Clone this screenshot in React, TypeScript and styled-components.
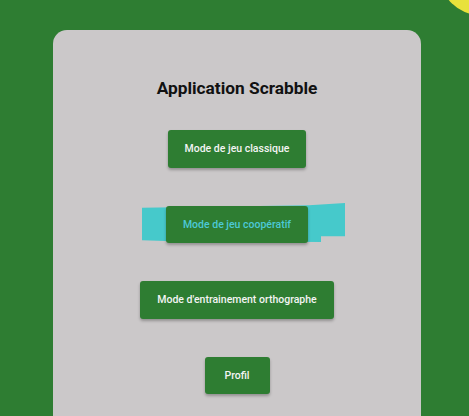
import React from "react";
import styled, { createGlobalStyle } from "styled-components";

const GlobalStyle = createGlobalStyle`
  html, body {
    margin: 0;
    padding: 0;
    background: #2e7d32;
    overflow: hidden;
    font-family: Roboto, "Liberation Sans", Arial, sans-serif;
  }
`;

const Page = styled.div`
  position: relative;
  width: 469px;
  height: 416px;
  overflow: hidden;
  background: #2e7d32;
`;

const Sun = styled.div`
  position: absolute;
  left: 440px;
  top: -65px;
  width: 80px;
  height: 80px;
  border-radius: 50%;
  background: #e8e23b;
`;

const Card = styled.main`
  margin: 30px 0 0 53px;
  width: 368px;
  height: 420px;
  box-sizing: border-box;
  background: #cbc8c9;
  border-radius: 14px;
  padding-top: 48px;
  display: flex;
  flex-direction: column;
  align-items: center;
`;

const Title = styled.h1`
  margin: 0 0 31px;
  font-size: 17.3px;
  line-height: 21px;
  font-weight: 700;
  color: #111;
`;

const Menu = styled.div`
  display: flex;
  flex-direction: column;
  align-items: center;
  gap: 38px;
`;

const Slot = styled.div`
  position: relative;
  display: flex;
`;

const Highlight = styled.svg`
  position: absolute;
  left: -24px;
  top: -3px;
  width: 203px;
  height: 40px;
  z-index: 0;
`;

const Button = styled.button<{ $active?: boolean }>`
  position: relative;
  z-index: 1;
  height: 37.5px;
  min-width: 65px;
  padding: 0 17px;
  border: none;
  border-radius: 3px;
  background: #2e7d32;
  color: ${(p) => (p.$active ? "#4cc9d6" : "#f4f4f4")};
  font-family: Roboto, "Liberation Sans", Arial, sans-serif;
  font-size: 10.5px;
  font-weight: 500;
  box-shadow: 0 2px 3px rgba(0, 0, 0, 0.28);
  cursor: pointer;
`;

export default function App() {
  return (
    <Page>
      <GlobalStyle />
      <Sun />
      <Card>
        <Title>Application Scrabble</Title>
        <Menu>
          <Slot>
            <Button>Mode de jeu classique</Button>
          </Slot>
          <Slot>
            <Highlight viewBox="0 0 203 40" preserveAspectRatio="none">
              <polygon
                points="0,4.7 167,2.3 203,0 203,33.3 179,33.3 179,39 24,38 0,37.3"
                fill="#46c9cb"
              />
            </Highlight>
            <Button $active>Mode de jeu coopératif</Button>
          </Slot>
          <Slot>
            <Button>Mode d'entrainement orthographe</Button>
          </Slot>
          <Slot>
            <Button>Profil</Button>
          </Slot>
        </Menu>
      </Card>
    </Page>
  );
}
